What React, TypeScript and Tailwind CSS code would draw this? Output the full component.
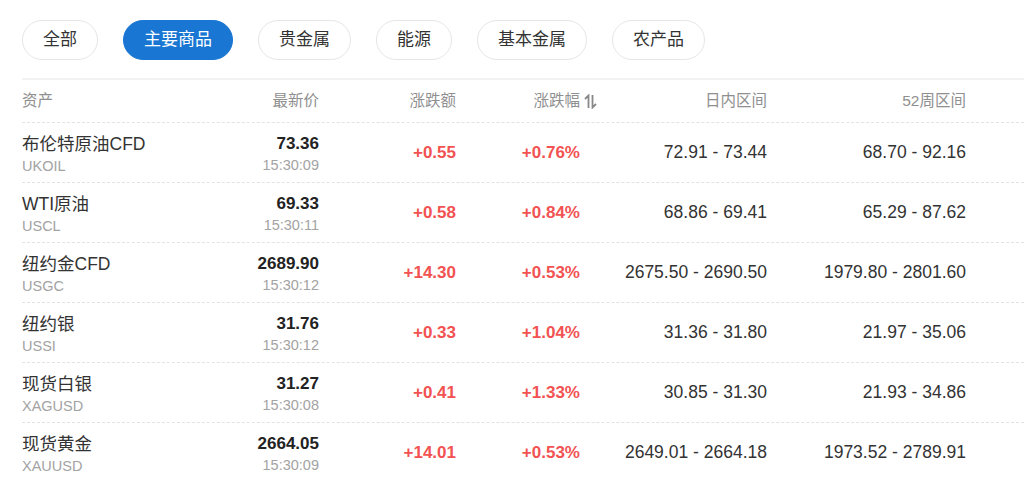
const tabs = ['全部', '主要商品', '贵金属', '能源', '基本金属', '农产品'];

const rows = [
  { name: '布伦特原油CFD', code: 'UKOIL', price: '73.36', time: '15:30:09', chg: '+0.55', pct: '+0.76%', day: '72.91 - 73.44', week: '68.70 - 92.16' },
  { name: 'WTI原油', code: 'USCL', price: '69.33', time: '15:30:11', chg: '+0.58', pct: '+0.84%', day: '68.86 - 69.41', week: '65.29 - 87.62' },
  { name: '纽约金CFD', code: 'USGC', price: '2689.90', time: '15:30:12', chg: '+14.30', pct: '+0.53%', day: '2675.50 - 2690.50', week: '1979.80 - 2801.60' },
  { name: '纽约银', code: 'USSI', price: '31.76', time: '15:30:12', chg: '+0.33', pct: '+1.04%', day: '31.36 - 31.80', week: '21.97 - 35.06' },
  { name: '现货白银', code: 'XAGUSD', price: '31.27', time: '15:30:08', chg: '+0.41', pct: '+1.33%', day: '30.85 - 31.30', week: '21.93 - 34.86' },
  { name: '现货黄金', code: 'XAUUSD', price: '2664.05', time: '15:30:09', chg: '+14.01', pct: '+0.53%', day: '2649.01 - 2664.18', week: '1973.52 - 2789.91' },
];

function SortIcon() {
  return (
    <svg width="13" height="15" viewBox="0 0 13 15" fill="none" stroke="#888" strokeWidth="1.8" className="absolute left-[calc(100%+4px)] top-[2px]">
      <path d="M4.5 14V1.5L1 5" />
      <path d="M8.5 1v12.5l3.5-3.5" />
    </svg>
  );
}

const grid = 'grid grid-cols-[158px_139px_137px_124px_187px_199px_1fr]';

export default function App() {
  return (
    <div className="w-[1024px] h-[480px] overflow-hidden bg-white pl-[22px] pt-5 font-['Liberation_Sans','Noto_Sans_CJK_SC',sans-serif]">
      {/* Category tabs */}
      <div className="flex gap-[25px]">
        {tabs.map((t, i) => (
          <div
            key={t}
            className={
              i === 1
                ? 'h-10 px-5 border border-[#1976d2] bg-[#1976d2] rounded-full flex items-center text-[17px] text-white'
                : 'h-10 px-5 border border-[#e6e6e6] rounded-full flex items-center text-[17px] text-[#333]'
            }
          >
            {t}
          </div>
        ))}
      </div>

      {/* Table */}
      <div className="mt-[18px] border-t-2 border-[#f3f3f3]">
        <div className={`${grid} h-[43px] items-center text-[15.5px] text-[#8f8f8f] border-b border-dashed border-[#e3e3e3]`}>
          <div>资产</div>
          <div className="text-right">最新价</div>
          <div className="text-right">涨跌额</div>
          <div className="text-right">
            <span className="relative">
              涨跌幅
              <SortIcon />
            </span>
          </div>
          <div className="text-right">日内区间</div>
          <div className="text-right">52周区间</div>
          <div />
        </div>

        {rows.map((r) => (
          <div key={r.code} className={`${grid} h-[60px] border-b border-dashed border-[#e3e3e3]`}>
            <div className="pt-[10px]">
              <div className="text-[17.5px] leading-[22px] text-[#333]">{r.name}</div>
              <div className="text-[14.5px] leading-[22px] text-[#a3a3a3]">{r.code}</div>
            </div>
            <div className="pt-[10px] text-right">
              <div className="text-[17px] leading-[22px] font-bold text-[#222]">{r.price}</div>
              <div className="text-[14.5px] leading-[20px] text-[#a3a3a3]">{r.time}</div>
            </div>
            <div className="flex items-center justify-end text-[17px] font-bold text-[#f25252]">{r.chg}</div>
            <div className="flex items-center justify-end text-[17px] font-bold text-[#f25252]">{r.pct}</div>
            <div className="flex items-center justify-end text-[17.5px] text-[#333]">{r.day}</div>
            <div className="flex items-center justify-end text-[17.5px] text-[#333]">{r.week}</div>
            <div />
          </div>
        ))}
      </div>
    </div>
  );
}
